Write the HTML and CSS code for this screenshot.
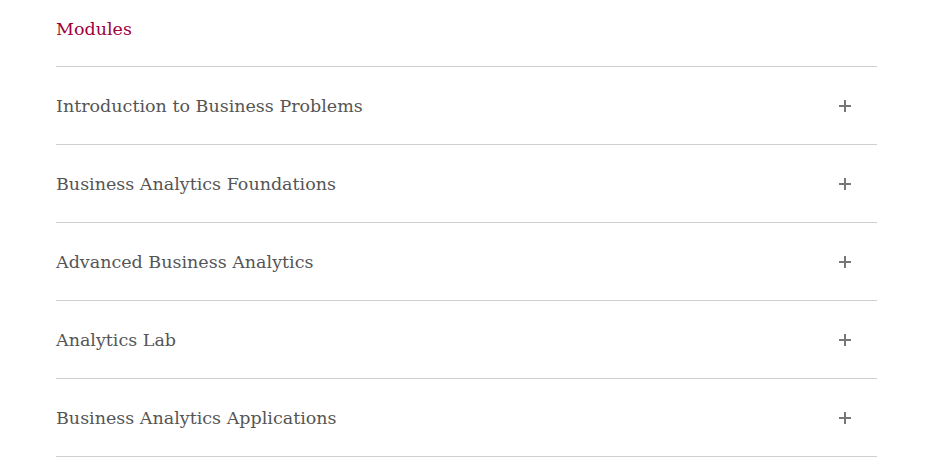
FILE: index.html
```html
<!DOCTYPE html>
<html>
<head>
<meta charset="utf-8">
<link rel="stylesheet" href="styles.css">
</head>
<body>
<section class="modules">
  <h2 class="modules-title">Modules</h2>
  <ul class="module-list">
    <li class="module-item"><span class="module-name">Introduction to Business Problems</span><span class="plus"></span></li>
    <li class="module-item"><span class="module-name">Business Analytics Foundations</span><span class="plus"></span></li>
    <li class="module-item"><span class="module-name">Advanced Business Analytics</span><span class="plus"></span></li>
    <li class="module-item"><span class="module-name">Analytics Lab</span><span class="plus"></span></li>
    <li class="module-item"><span class="module-name">Business Analytics Applications</span><span class="plus"></span></li>
  </ul>
</section>
</body>
</html>
```
FILE: styles.css
```css
html, body {
  margin: 0;
  padding: 0;
  background: #fff;
}
.modules {
  width: 821px;
  margin-left: 56px;
  padding-top: 17px;
  font-family: "DejaVu Serif", Georgia, serif;
}
.modules-title {
  margin: 0;
  font-weight: normal;
  font-size: 17.5px;
  line-height: 24px;
  color: #a1003d;
  padding-bottom: 25px;
  border-bottom: 1px solid #cfcfcf;
}
.module-list {
  list-style: none;
  margin: 0;
  padding: 0;
}
.module-item {
  display: flex;
  align-items: center;
  justify-content: space-between;
  height: 77px;
  border-bottom: 1px solid #cfcfcf;
}
.module-name {
  font-size: 17.5px;
  color: #555;
}
.plus {
  position: relative;
  width: 12px;
  height: 12px;
  margin-right: 26px;
}
.plus::before, .plus::after {
  content: "";
  position: absolute;
  background: #777;
}
.plus::before {
  left: 0;
  top: 5px;
  width: 12px;
  height: 2px;
}
.plus::after {
  left: 5px;
  top: 0;
  width: 2px;
  height: 12px;
}
```
